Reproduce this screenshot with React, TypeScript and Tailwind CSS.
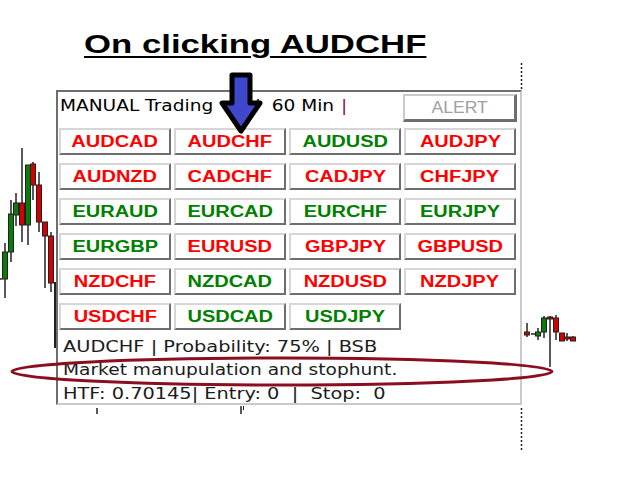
import React from "react"

type Pair = { name: string; up: boolean }

const pairs: Pair[] = [
  { name: "AUDCAD", up: false },
  { name: "AUDCHF", up: false },
  { name: "AUDUSD", up: true },
  { name: "AUDJPY", up: false },
  { name: "AUDNZD", up: false },
  { name: "CADCHF", up: false },
  { name: "CADJPY", up: false },
  { name: "CHFJPY", up: false },
  { name: "EURAUD", up: true },
  { name: "EURCAD", up: true },
  { name: "EURCHF", up: true },
  { name: "EURJPY", up: true },
  { name: "EURGBP", up: true },
  { name: "EURUSD", up: false },
  { name: "GBPJPY", up: false },
  { name: "GBPUSD", up: false },
  { name: "NZDCHF", up: false },
  { name: "NZDCAD", up: true },
  { name: "NZDUSD", up: false },
  { name: "NZDJPY", up: false },
  { name: "USDCHF", up: false },
  { name: "USDCAD", up: true },
  { name: "USDJPY", up: true },
]

// x, wick top, wick bottom, body top, body bottom, bullish
const candles: [number, number, number, number, number, boolean][] = [
  [5, 243, 298, 252, 279, true],
  [11, 200, 262, 214, 252, true],
  [16, 193, 226, 203, 215, true],
  [22, 148, 242, 203, 225, false],
  [28, 165, 245, 165, 225, true],
  [33, 162, 200, 164, 185, false],
  [39, 172, 232, 185, 222, false],
  [45, 222, 288, 222, 236, false],
  [51, 232, 292, 236, 283, false],
  [527, 323, 337, 332, 335, false],
  [538, 328, 340, 332, 336, true],
  [544, 316, 338, 318, 332, true],
  [550, 316, 367, 317, 319, false],
  [556, 315, 340, 318, 332, false],
  [562, 333, 341, 333, 341, false],
  [567, 333, 341, 337, 338, false],
  [573, 336, 341, 337, 341, false],
]

function ChartBackdrop() {
  return (
    <svg className="absolute inset-0" width="640" height="480" viewBox="0 0 640 480">
      {candles.map(([x, wt, wb, bt, bb, bull], i) => (
        <g key={i}>
          <line x1={x} y1={wt} x2={x} y2={wb} stroke="#222" strokeWidth="1.5" />
          <rect
            x={x - 2.5}
            y={bt}
            width="5"
            height={Math.max(bb - bt, 2)}
            fill={bull ? "#0a7a0a" : "#d40000"}
            stroke="#222"
            strokeWidth="1"
          />
        </g>
      ))}
      <line x1="531" y1="334" x2="535" y2="334" stroke="#222" strokeWidth="1.5" />
      <line x1="55" y1="282" x2="55" y2="348" stroke="#222" strokeWidth="2" />
      <line x1="0" y1="279" x2="2" y2="279" stroke="#222" strokeWidth="1.5" />
      <line x1="521.5" y1="63" x2="521.5" y2="90" stroke="#222" strokeWidth="1.5" strokeDasharray="2 2" />
      <line x1="521.5" y1="408" x2="521.5" y2="450" stroke="#222" strokeWidth="1.5" strokeDasharray="2 2" />
      <line x1="97" y1="408" x2="97" y2="414" stroke="#222" strokeWidth="1.5" />
      <line x1="241" y1="406" x2="241" y2="414" stroke="#222" strokeWidth="1.5" />
      <line x1="243.5" y1="406" x2="243.5" y2="410" stroke="#222" strokeWidth="1" />
    </svg>
  )
}

function PairButton({ pair }: { pair: Pair }) {
  return (
    <button className="h-[27px] w-[112px] bg-white border-2 border-t-[#d6d6d6] border-l-[#d6d6d6] border-b-[#6e6e6e] border-r-[#6e6e6e] flex items-center justify-center">
      <span
        className={`inline-block scale-x-[1.25] font-bold text-[16px] leading-none font-['Liberation_Sans',Arial,sans-serif] ${
          pair.up ? "text-[#008000]" : "text-[#ff0000]"
        }`}
      >
        {pair.name}
      </span>
    </button>
  )
}

export default function App() {
  return (
    <div className="relative w-[640px] h-[480px] bg-white overflow-hidden">
      <ChartBackdrop />

      <div className="relative">
        {/* Title */}
        <div className="pt-[32px] pl-[84px] h-[57px]">
          <span className="inline-block origin-left scale-x-[1.39] font-bold text-[25px] leading-none text-black underline decoration-2 underline-offset-[3px] font-['Liberation_Sans',Arial,sans-serif]">
            On clicking AUDCHF
          </span>
        </div>

        {/* Panel */}
        <div className="ml-[56px] mt-[33px] w-[466px] bg-white border-2 border-t-[#6e6e6e] border-l-[#6e6e6e] border-r-[#cacaca] border-b-[#cacaca] font-['DejaVu_Sans',Verdana,sans-serif]">
          <div className="h-[36px] flex items-start justify-between pt-[2px] pr-[3px]">
            <div className="mt-[2px] ml-[2px] inline-flex origin-left scale-x-[1.16] text-[16px] leading-[20px] text-black whitespace-pre">
              <span>MANUAL Trading</span>
              <span className="ml-[34px]">/</span>
              <span className="ml-[11px]">60 Min</span>
              <span className="ml-[6px] text-[#80105a]">|</span>
            </div>
            <button className="h-[28px] w-[114px] bg-white border-2 border-t-[#cacaca] border-l-[#cacaca] border-b-[#6e6e6e] border-r-[#6e6e6e] border-b-[3px] border-r-[3px] flex items-center justify-center">
              <span className="inline-block scale-x-[1.1] text-[16px] leading-none text-[#a0a0a0] font-['Liberation_Sans',Arial,sans-serif]">
                ALERT
              </span>
            </button>
          </div>

          <div className="pl-[1px] grid grid-cols-[repeat(4,112px)] gap-x-[3px] gap-y-[8px]">
            {pairs.map((p) => (
              <PairButton key={p.name} pair={p} />
            ))}
          </div>

          <div className="pt-[6px] pl-[5px] text-[15px] leading-[23px] text-[#1c1c1c]">
            <div className="h-[23px]">
              <span className="inline-block origin-left scale-x-[1.29] whitespace-pre">AUDCHF | Probability: 75% | BSB</span>
            </div>
            <div className="h-[24px]">
              <span className="inline-block origin-left scale-x-[1.24] whitespace-pre">Market manupulation and stophunt.</span>
            </div>
            <div className="h-[20px]">
              <span className="inline-block origin-left scale-x-[1.29] whitespace-pre">HTF: 0.70145| Entry: 0  |  Stop:  0</span>
            </div>
          </div>
        </div>
      </div>

      {/* Ellipse highlight */}
      <svg className="absolute left-0 top-0 pointer-events-none" width="640" height="480" viewBox="0 0 640 480">
        <ellipse cx="282" cy="371.5" rx="270" ry="13.5" fill="none" stroke="#8b0d1f" strokeWidth="3" />
        {/* Arrow */}
        <path
          d="M232 75 H250 V103 H260 L241 131 L222 103 H232 Z"
          fill="#3f48cc"
          stroke="#000"
          strokeWidth="5"
          strokeLinejoin="round"
        />
      </svg>
    </div>
  )
}
